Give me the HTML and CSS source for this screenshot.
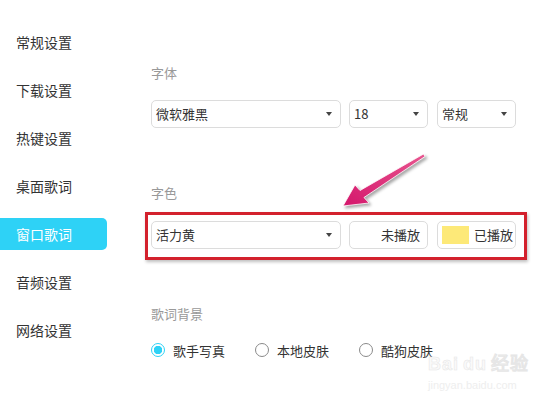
FILE: index.html
```html
<!DOCTYPE html>
<html lang="zh-CN">
<head>
    <meta charset="UTF-8">
    <meta name="viewport" content="width=device-width, initial-scale=1.0">
    <title>窗口歌词设置</title>
    <link rel="stylesheet" href="styles.css">
</head>
<body>
    <div class="page">
        <!-- Sidebar -->
        <ul class="nav">
            <li class="nav-item">常规设置</li>
            <li class="nav-item">下载设置</li>
            <li class="nav-item">热键设置</li>
            <li class="nav-item">桌面歌词</li>
            <li class="nav-item active">窗口歌词</li>
            <li class="nav-item">音频设置</li>
            <li class="nav-item">网络设置</li>
        </ul>

        <!-- Settings -->
        <div class="content">
            <div class="label">字体</div>
            <div class="row">
                <div class="select w-font">微软雅黑<span class="caret"></span></div>
                <div class="select w-small">18<span class="caret"></span></div>
                <div class="select w-small">常规<span class="caret"></span></div>
            </div>

            <div class="label label-color">字色</div>
            <div class="mark">
                <div class="row">
                    <div class="select w-font">活力黄<span class="caret"></span></div>
                    <div class="box w-small right">未播放</div>
                    <div class="box w-small"><span class="swatch"></span>已播放</div>
                </div>
            </div>

            <div class="label label-bg">歌词背景</div>
            <div class="radios">
                <label class="radio"><span class="dot checked"></span>歌手写真</label>
                <label class="radio"><span class="dot"></span>本地皮肤</label>
                <label class="radio"><span class="dot"></span>酷狗皮肤</label>
            </div>
        </div>
    </div>

    <!-- annotation arrow -->
    <svg class="arrow" width="550" height="400" viewBox="0 0 550 400">
        <defs>
            <linearGradient id="g" x1="0" y1="1" x2="1" y2="0">
                <stop offset="0" stop-color="#d4176c"/>
                <stop offset="1" stop-color="#e8558f"/>
            </linearGradient>
        </defs>
        <polygon points="343,206 355,185 360,190.5 423.5,154 425,156.5 364,197.5 369,203" fill="url(#g)" stroke="#fff" stroke-width="0.8"/>
    </svg>

    <div class="watermark">
        <div class="wm-logo">Bai<span class="wm-du">du</span>经验</div>
        <div class="wm-url">jingyan.baidu.com</div>
    </div>
</body>
</html>
```

FILE: styles.css
```css
body { margin: 0; background: #fff; font-family: "Microsoft YaHei", "Noto Sans CJK SC", "Noto Sans", sans-serif; color: #333; }
.page { display: flex; width: 550px; height: 400px; overflow: hidden; }

.nav { list-style: none; margin: 0; padding: 26px 0 0; width: 107px; flex-shrink: 0; }
.nav-item { height: 32px; line-height: 32px; margin-bottom: 16px; padding-left: 16px; font-size: 14px; color: #333; border-radius: 0 5px 5px 0; }
.nav-item.active { background: #2ed2f6; color: #fff; }

.content { padding: 63px 0 0 44px; }
.label { font-size: 13px; line-height: 20px; color: #999; }
.label-color { margin-top: 55px; }
.label-bg { margin-top: 44px; }

.row { display: flex; gap: 8px; margin-top: 17px; }
.mark .row { margin-top: 0; }
.select, .box { position: relative; box-sizing: border-box; height: 28px; line-height: 26px; border: 1px solid #dcdcdc; border-radius: 5px; padding: 0 4px; font-size: 13px; color: #333; white-space: nowrap; }
.w-font { width: 190px; }
.w-small { width: 79px; }
.row .w-small:last-child { margin-left: 1px; }
.right { text-align: right; padding-right: 7px; }
.caret { position: absolute; right: 8px; top: 11px; border-left: 3.5px solid transparent; border-right: 3.5px solid transparent; border-top: 4px solid #444; }
.swatch { display: inline-block; width: 27px; height: 18px; background: #fde978; vertical-align: middle; margin: -3px 5px 0 0; }

.mark { margin: 9px 0 0 -6px; padding: 6px 8px 8px 3px; border: 3px solid #d3212d; width: 365px; box-shadow: 1px 2px 3px rgba(0,0,0,0.25); }

.radios { display: flex; margin-top: 16px; }
.radio { display: flex; align-items: center; height: 20px; font-size: 13px; color: #333; margin-right: 30px; }
.dot { box-sizing: border-box; width: 14px; height: 14px; border: 1px solid #8a8a8a; border-radius: 50%; margin-right: 8px; }
.dot.checked { border-color: #2ed2f6; background: radial-gradient(circle, #2ed2f6 0 4px, #fff 4.5px); }

.arrow { position: absolute; left: 0; top: 0; pointer-events: none; filter: drop-shadow(2px 2px 1.5px rgba(0,0,0,0.35)); }

.watermark { position: absolute; left: 428px; top: 353px; color: #fafafa; -webkit-text-stroke: 0.5px #e6e6e6; font-family: "Liberation Sans", Arial, sans-serif; }
.wm-logo { font-size: 18px; font-weight: bold; line-height: 22px; letter-spacing: 1px; }
.wm-du { margin: 0 4px; }
.wm-url { font-size: 11px; line-height: 13px; margin-top: 4px; color: #eeeeee; -webkit-text-stroke: 0; }
```
